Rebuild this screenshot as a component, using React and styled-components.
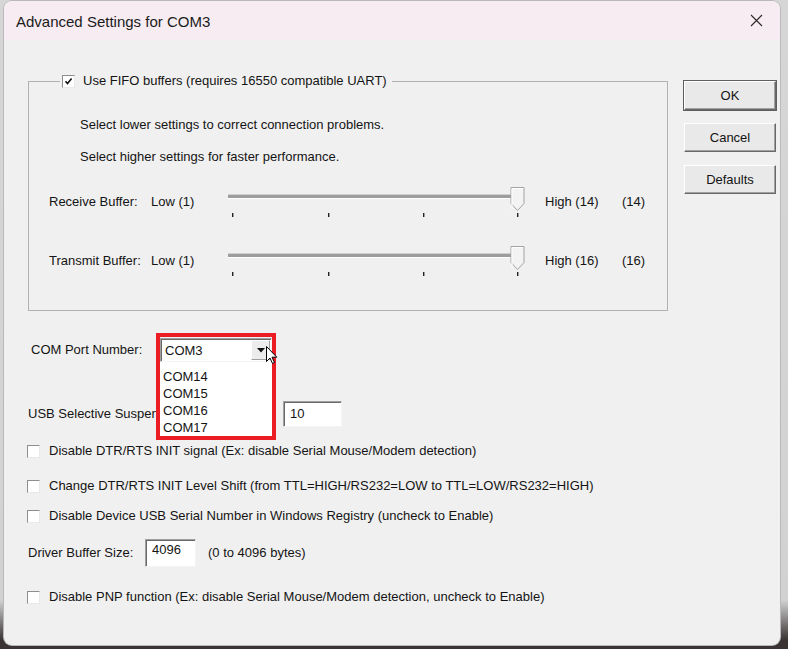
import React from 'react';
import styled, { createGlobalStyle } from 'styled-components';

const TEXT = '#141414';
const FACE = '#f0f0f0';
const SHADOW = '#a0a0a0';
const DARK = '#696969';

const GlobalStyle = createGlobalStyle`
  html, body {
    margin: 0;
    padding: 0;
  }
  body {
    font-family: "Liberation Sans", Arial, sans-serif;
    font-size: 13px;
    color: ${TEXT};
  }
`;

const Desktop = styled.div`
  width: 788px;
  height: 649px;
  overflow: hidden;
  background: linear-gradient(to bottom, #d6d6d6 0, #d2d2d2 600px, #3a3434 640px);
  padding: 1px 0 0 4px;
  box-sizing: border-box;
`;

const Dialog = styled.div`
  width: 776px;
  height: 644px;
  background: ${FACE};
  border-radius: 8px;
  box-shadow: 0 0 0 1px #b9b9b9;
  overflow: hidden;
  display: flex;
  flex-direction: column;
`;

const TitleBar = styled.div`
  height: 39px;
  flex-shrink: 0;
  background: #f6ecf1;
  display: flex;
  align-items: center;
  justify-content: space-between;
  padding: 0 17px 0 12px;
`;

const Title = styled.span`
  font-size: 15px;
  color: #1b1b1b;
  margin-top: 1px;
`;

const CloseIcon = () => (
  <svg width="13" height="13" viewBox="0 0 13 13">
    <path d="M1 1 L12 12 M12 1 L1 12" stroke="#2a2a2a" strokeWidth="1.1" fill="none" />
  </svg>
);

const Body = styled.div`
  flex: 1;
  padding: 33px 0 0 24px;
`;

const TopRow = styled.div`
  display: flex;
  align-items: flex-start;
`;

const Group = styled.fieldset`
  margin: 0;
  padding: 0;
  min-width: 0;
  width: 640px;
  box-sizing: border-box;
  border: 1px solid #b2b2b2;
`;

const Legend = styled.legend`
  margin-left: 31px;
  padding: 0 5px 0 2px;
  height: 16px;
  line-height: 16px;
  display: flex;
  align-items: center;
  gap: 8px;
`;

const Box = styled.span`
  display: inline-flex;
  align-items: center;
  justify-content: center;
  width: 13px;
  height: 13px;
  box-sizing: border-box;
  flex-shrink: 0;
  background: #fff;
  border: 1px solid;
  border-color: #8d8d8d #e9e9e9 #e9e9e9 #8d8d8d;
  margin-left: ${p => p.$shift || 0}px;
`;

const Checkbox = ({ checked, shift }) => (
  <Box $shift={shift}>
    {checked && (
      <svg width="9" height="9" viewBox="0 0 9 9">
        <path d="M1.5 4.2 L3.5 6.5 L7.6 1.6" stroke="#111" strokeWidth="1.6" fill="none" />
      </svg>
    )}
  </Box>
);

const GroupInner = styled.div`
  padding: 28px 0 32px 0;
`;

const Note = styled.div`
  line-height: 16px;
  padding-left: 51px;
  margin-top: ${p => p.$mt || 0}px;
`;

const SliderRow = styled.div`
  display: flex;
  align-items: flex-start;
  height: 34px;
  padding-left: 20px;
  margin-top: ${p => p.$mt || 0}px;
`;

const Cell = styled.span`
  line-height: 16px;
  margin-top: 9px;
  width: ${p => (p.$w ? `${p.$w}px` : 'auto')};
  margin-left: ${p => p.$ml || 0}px;
  flex-shrink: 0;
`;

const TICKS = [4, 100, 195, 289];

const Slider = () => (
  <svg width="300" height="34" viewBox="0 0 300 34">
    <rect x="0" y="9" width="292" height="1" fill="#d0d0d0" />
    <rect x="0" y="10" width="292" height="3" fill="#9d9d9d" />
    <rect x="0" y="13" width="292" height="1" fill="#ffffff" />
    {TICKS.map(x => (
      <rect key={x} x={x} y="28" width="1.4" height="4" fill="#222" />
    ))}
    <path d="M283 2.5 H296 V18.5 L289.5 25.5 L283 18.5 Z" fill="#f3f3f3" stroke="#a3a3a3" />
    <path d="M284 24 V3.5 H295" stroke="#ffffff" fill="none" />
  </svg>
);

const ButtonColumn = styled.div`
  display: flex;
  flex-direction: column;
  gap: 13px;
  margin: 8px 0 0 16px;
`;

const Button = styled.button`
  width: 92px;
  height: 29px;
  box-sizing: border-box;
  font-family: inherit;
  font-size: 13px;
  color: ${TEXT};
  background: #e9e9e9;
  border: 1px solid;
  border-color: #ffffff ${DARK} ${DARK} #ffffff;
  box-shadow: ${p =>
    p.$default ? `0 0 0 1px #5e5e5e, inset -1px -1px 0 ${SHADOW}` : `inset -1px -1px 0 ${SHADOW}`};
  padding: 0;
`;

const Lower = styled.div`
  padding-left: 0;
`;

const Row = styled.div`
  display: flex;
  align-items: center;
  height: ${p => p.$h || 16}px;
  margin-top: ${p => p.$mt || 0}px;
`;

const Label = styled.span`
  line-height: 16px;
  width: ${p => (p.$w ? `${p.$w}px` : 'auto')};
  padding-left: ${p => p.$pl || 0}px;
  margin-left: ${p => p.$ml || 0}px;
  box-sizing: border-box;
  flex-shrink: 0;
  white-space: nowrap;
`;

/* label partly hidden behind the open drop-down list */
const CoveredLabel = styled(Label)`
  overflow: hidden;
`;

const sunken = `
  background: #fff;
  box-sizing: border-box;
  border: 1px solid;
  border-color: ${SHADOW} #f4f4f4 #f4f4f4 ${SHADOW};
  box-shadow: inset 1px 1px 0 ${DARK};
`;

const Field = styled.div`
  ${sunken}
  width: ${p => p.$w}px;
  height: ${p => p.$h}px;
  padding: ${p => p.$pad};
  margin-left: ${p => p.$ml || 0}px;
  line-height: 16px;
  font-size: 13px;
`;

const ComboWrap = styled.div`
  position: relative;
  width: 112px;
  height: 24px;
`;

const Combo = styled.div`
  ${sunken}
  width: 112px;
  height: 24px;
  display: flex;
  align-items: center;
  justify-content: space-between;
  padding: 0 1px 0 4px;
`;

const ArrowButton = styled.span`
  width: 19px;
  height: 20px;
  box-sizing: border-box;
  background: #ececec;
  border: 1px solid;
  border-color: #fff ${SHADOW} ${SHADOW} #fff;
  display: flex;
  align-items: center;
  justify-content: center;
`;

const DropList = styled.div`
  position: absolute;
  top: 24px;
  left: 0;
  width: 112px;
  height: 75px;
  box-sizing: border-box;
  background: #fff;
  padding: 6px 0 0 3px;
  z-index: 2;
`;

const DropItem = styled.div`
  line-height: 17px;
  height: 17px;
`;

const Highlight = styled.div`
  position: absolute;
  left: -4px;
  top: -5px;
  width: 120px;
  height: 107px;
  box-sizing: border-box;
  border: 4px solid #ec1c24;
  z-index: 3;
  pointer-events: none;
`;

const Cursor = styled.svg`
  position: absolute;
  left: 106px;
  top: 8px;
  z-index: 4;
`;

const CheckRow = ({ mt, children }) => (
  <Row $mt={mt}>
    <Checkbox shift={-1} />
    <Label $ml={9}>{children}</Label>
  </Row>
);

export default function App() {
  return (
    <>
      <GlobalStyle />
      <Desktop>
        <Dialog>
          <TitleBar>
            <Title>Advanced Settings for COM3</Title>
            <CloseIcon />
          </TitleBar>
          <Body>
            <TopRow>
              <Group>
                <Legend>
                  <Checkbox checked />
                  <span>Use FIFO buffers (requires 16550 compatible UART)</span>
                </Legend>
                <GroupInner>
                  <Note>Select lower settings to correct connection problems.</Note>
                  <Note $mt={16}>Select higher settings for faster performance.</Note>
                  <SliderRow $mt={20}>
                    <Cell $w={102}>Receive Buffer:</Cell>
                    <Cell $w={77}>Low (1)</Cell>
                    <Slider />
                    <Cell $w={77} $ml={17}>High (14)</Cell>
                    <Cell>(14)</Cell>
                  </SliderRow>
                  <SliderRow $mt={25}>
                    <Cell $w={102}>Transmit Buffer:</Cell>
                    <Cell $w={77}>Low (1)</Cell>
                    <Slider />
                    <Cell $w={77} $ml={17}>High (16)</Cell>
                    <Cell>(16)</Cell>
                  </SliderRow>
                </GroupInner>
              </Group>
              <ButtonColumn>
                <Button $default>OK</Button>
                <Button>Cancel</Button>
                <Button>Defaults</Button>
              </ButtonColumn>
            </TopRow>

            <Lower>
              <Row $h={24} $mt={27}>
                <Label $w={132} $pl={3}>COM Port Number:</Label>
                <ComboWrap>
                  <Combo>
                    <span>COM3</span>
                    <ArrowButton>
                      <svg width="8" height="5" viewBox="0 0 8 5">
                        <path d="M0 0 H8 L4 4.5 Z" fill="#111" />
                      </svg>
                    </ArrowButton>
                  </Combo>
                  <DropList>
                    <DropItem>COM14</DropItem>
                    <DropItem>COM15</DropItem>
                    <DropItem>COM16</DropItem>
                    <DropItem>COM17</DropItem>
                  </DropList>
                  <Highlight />
                  <Cursor width="12" height="19" viewBox="0 0 12 19">
                    <path d="M0.5 0.5 V15.5 L4 12 L6.5 17.5 L8.5 16.5 L6 11.2 H10.8 Z" fill="#fff" stroke="#000" strokeWidth="1" />
                  </Cursor>
                </ComboWrap>
              </Row>

              <Row $h={26} $mt={39}>
                <CoveredLabel $w={128}>USB Selective Suspend Idle Timeout:</CoveredLabel>
                <Field $w={59} $h={26} $pad="4px 6px" $ml={127}>10</Field>
              </Row>

              <CheckRow mt={16}>Disable DTR/RTS INIT signal (Ex: disable Serial Mouse/Modem detection)</CheckRow>
              <CheckRow mt={19}>Change DTR/RTS INIT Level Shift (from TTL=HIGH/RS232=LOW to TTL=LOW/RS232=HIGH)</CheckRow>
              <CheckRow mt={14}>Disable Device USB Serial Number in Windows Registry (uncheck to Enable)</CheckRow>

              <Row $h={28} $mt={15}>
                <Label $w={117}>Driver Buffer Size:</Label>
                <Field $w={51} $h={28} $pad="2px 6px">4096</Field>
                <Label $ml={12}>(0 to 4096 bytes)</Label>
              </Row>

              <CheckRow mt={22}>Disable PNP function (Ex: disable Serial Mouse/Modem detection, uncheck to Enable)</CheckRow>
            </Lower>
          </Body>
        </Dialog>
      </Desktop>
    </>
  );
}
